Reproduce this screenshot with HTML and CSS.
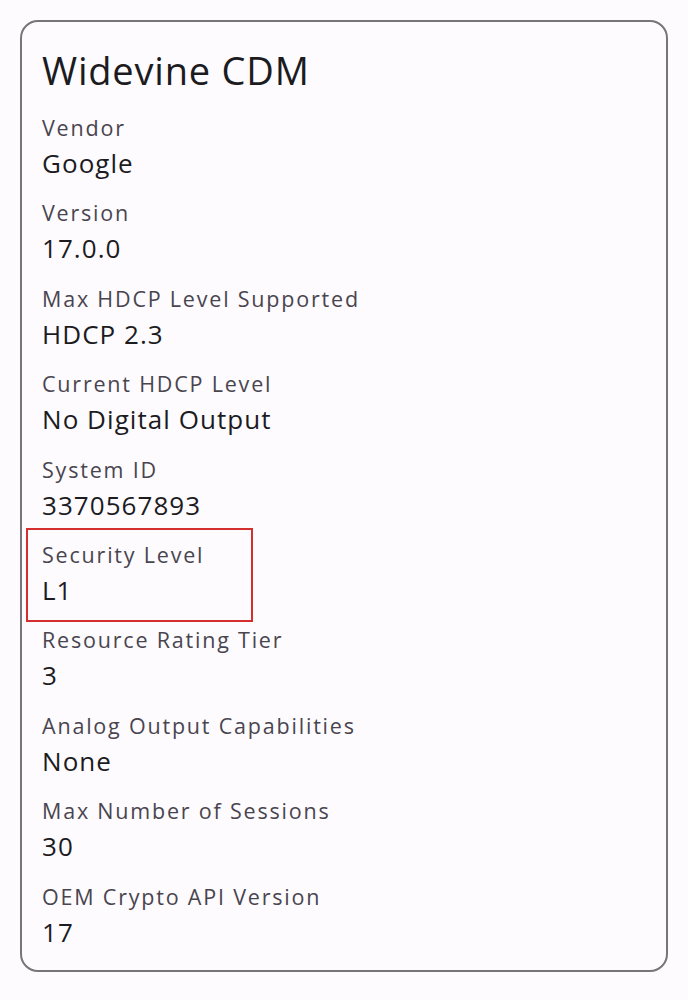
FILE: index.html
```html
<!DOCTYPE html>
<html lang="en">
<head>
<meta charset="utf-8">
<title>Widevine CDM</title>
<link rel="stylesheet" href="styles.css">
</head>
<body>
<main class="page">
  <section class="card">
    <h1 class="title">Widevine CDM</h1>
    <dl class="list">
      <div class="item"><dt class="label">Vendor</dt><dd class="value">Google</dd></div>
      <div class="item"><dt class="label">Version</dt><dd class="value">17.0.0</dd></div>
      <div class="item"><dt class="label">Max HDCP Level Supported</dt><dd class="value">HDCP 2.3</dd></div>
      <div class="item"><dt class="label">Current HDCP Level</dt><dd class="value">No Digital Output</dd></div>
      <div class="item"><dt class="label">System ID</dt><dd class="value">3370567893</dd></div>
      <div class="item highlighted"><dt class="label">Security Level</dt><dd class="value">L1</dd><span class="mark"></span></div>
      <div class="item"><dt class="label">Resource Rating Tier</dt><dd class="value">3</dd></div>
      <div class="item"><dt class="label">Analog Output Capabilities</dt><dd class="value">None</dd></div>
      <div class="item"><dt class="label">Max Number of Sessions</dt><dd class="value">30</dd></div>
      <div class="item"><dt class="label">OEM Crypto API Version</dt><dd class="value">17</dd></div>
    </dl>
  </section>
</main>
</body>
</html>
```
FILE: styles.css
```css
* { box-sizing: border-box; }
html, body { margin: 0; padding: 0; }
body {
  background: #fdfbfe;
  font-family: "Open Sans", "Noto Sans", sans-serif;
  color: #1c1b1f;
}
.page {
  padding: 20px;
  height: 1000px;
}
.card {
  width: 648px;
  height: 952px;
  border: 2px solid #767579;
  border-radius: 18px;
  padding: 23px 20px 19px 20px;
  background: #fdfbfe;
}
.title {
  margin: 0;
  font-size: 38px;
  line-height: 50px;
  font-weight: 400;
  color: #1c1b1f;
  letter-spacing: 0.8px;
}
.list {
  margin: 17px 0 0 0;
  display: flex;
  flex-direction: column;
  gap: 15.4px;
}
.item {
  position: relative;
  display: flex;
  flex-direction: column;
}
.label {
  font-size: 21.5px;
  line-height: 32px;
  color: #49454f;
  letter-spacing: 1.8px;
}
.value {
  margin: 0;
  font-size: 26px;
  line-height: 38px;
  color: #1c1b1f;
  letter-spacing: 1.05px;
}
.mark {
  position: absolute;
  left: -16px;
  top: -11px;
  width: 227px;
  height: 94px;
  border: 2px solid #d32f2f;
}
```
